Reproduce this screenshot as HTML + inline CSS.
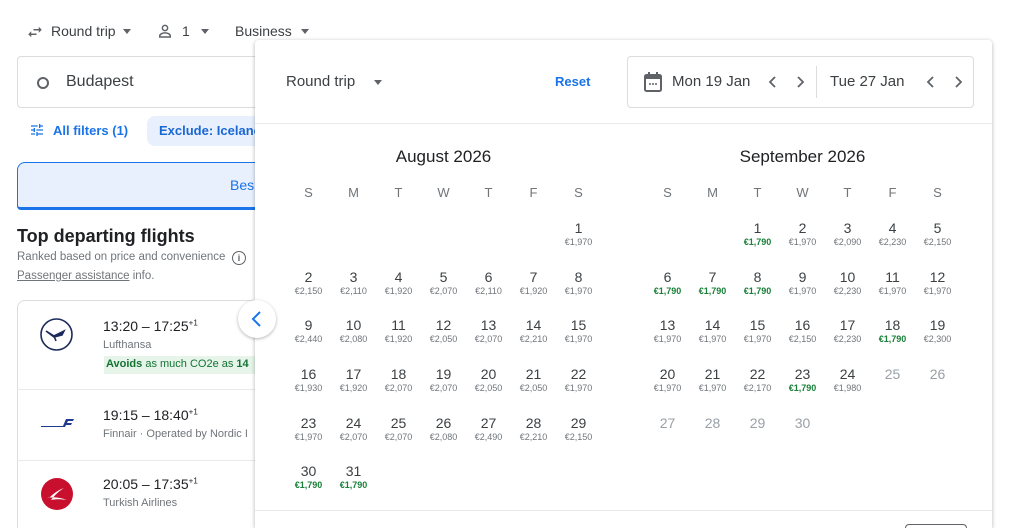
<!DOCTYPE html>
<html><head><meta charset="utf-8"><style>
*{box-sizing:border-box;margin:0;padding:0}
html,body{width:1024px;height:528px;overflow:hidden}
body{background:#fff;font-family:"Liberation Sans",Arial,sans-serif;color:#3c4043;position:relative}
.a{position:absolute;white-space:nowrap}
.grid{position:absolute;display:grid;grid-template-columns:repeat(7,45px);grid-auto-rows:48.7px}
.c{text-align:center;font-size:14px;color:#3c4043;line-height:18px}
.c small{display:block;font-size:9px;color:#70757a;line-height:10px}
.c small.g{color:#188038;font-weight:bold}
.c.x{color:#9aa0a6}
.hd{position:absolute;display:grid;grid-template-columns:repeat(7,45px);font-size:13px;color:#70757a;text-align:center}
</style></head><body>
<svg class="a" style="left:26px;top:23px" width="18" height="18" viewBox="0 0 24 24" fill="#5f6368"><path d="M6.99 11L3 15l3.99 4v-3H14v-2H6.99v-3zM21 9l-3.99-4v3H10v2h7.01v3L21 9z"/></svg>
<div class="a" style="left:51px;top:23px;font-size:14px">Round trip</div>
<div class="a" style="left:123px;top:29px;border:4px solid transparent;border-top:5px solid #5f6368"></div>
<svg class="a" style="left:156px;top:22px" width="18" height="18" viewBox="0 0 24 24" fill="none" stroke="#5f6368" stroke-width="2"><circle cx="12" cy="8" r="3.5"/><path d="M5 20v-1.5c0-2.5 4-4 7-4s7 1.5 7 4V20z"/></svg>
<div class="a" style="left:182px;top:23px;font-size:14px">1</div>
<div class="a" style="left:201px;top:29px;border:4px solid transparent;border-top:5px solid #5f6368"></div>
<div class="a" style="left:235px;top:23px;font-size:14px">Business</div>
<div class="a" style="left:301px;top:29px;border:4px solid transparent;border-top:5px solid #5f6368"></div>
<div class="a" style="left:17px;top:56px;width:260px;height:52px;border:1px solid #dadce0;border-radius:4px"></div>
<div class="a" style="left:37px;top:77px;width:12px;height:12px;border:2.5px solid #5f6368;border-radius:50%"></div>
<div class="a" style="left:66px;top:73px;font-size:16px;color:#3c4043">Budapest</div>
<svg class="a" style="left:29px;top:122px" width="16" height="16" viewBox="0 0 24 24" fill="#1a73e8"><path d="M3 17v2h6v-2H3zM3 5v2h10V5H3zm10 16v-2h8v-2h-8v-2h-2v6h2zM7 9v2H3v2h4v2h2V9H7zm14 4v-2H11v2h10zm-6-4h2V7h4V5h-4V3h-2v6z"/></svg>
<div class="a" style="left:53px;top:123px;font-size:13px;color:#1a73e8;font-weight:bold">All filters (1)</div>
<div class="a" style="left:147px;top:116px;width:130px;height:30px;background:#e8f0fe;border-radius:8px"></div>
<div class="a" style="left:159px;top:123px;font-size:13px;color:#1967d2;font-weight:bold">Exclude: Icelanc</div>
<div class="a" style="left:17px;top:162px;width:260px;height:48px;background:#e8f0fe;border:1px solid #1a73e8;border-bottom:3px solid #1a73e8;border-radius:8px 8px 4px 4px"></div>
<div class="a" style="left:230px;top:177px;font-size:14px;color:#1a73e8">Bes</div>
<div class="a" style="left:17px;top:226px;font-size:18px;color:#202124;font-weight:bold">Top departing flights</div>
<div class="a" style="left:17px;top:251px;font-size:11.5px;color:#70757a">Ranked based on price and convenience</div>
<div class="a" style="left:232px;top:251px;width:14px;height:14px;border:1.3px solid #5f6368;border-radius:50%;font-size:9px;text-align:center;line-height:12px;color:#5f6368;font-weight:bold">i</div>
<div class="a" style="left:17px;top:270px;font-size:11.5px;color:#70757a"><u>Passenger assistance</u> info.</div>
<div class="a" style="left:17px;top:300px;width:270px;height:240px;border:1px solid #dadce0;border-radius:8px"></div>
<div class="a" style="left:17px;top:389px;width:260px;border-top:1px solid #e8eaed"></div>
<div class="a" style="left:17px;top:460px;width:260px;border-top:1px solid #e8eaed"></div>
<svg class="a" style="left:40px;top:318px" width="33" height="33" viewBox="0 0 33 33"><circle cx="16.5" cy="16.5" r="15.5" fill="none" stroke="#1b2a5a" stroke-width="1.6"/><path d="M6 13l8 5 10-5 -2 4 -8 2z M14 18l2 5" stroke="#1b2a5a" stroke-width="1.6" fill="#1b2a5a"/></svg>
<div class="a" style="left:103px;top:318px;font-size:14px;color:#202124">13:20 – 17:25<sup style="font-size:8px">+1</sup></div>
<div class="a" style="left:103px;top:339px;font-size:11px;color:#70757a">Lufthansa</div>
<div class="a" style="left:104px;top:356px;width:152px;height:18px;background:#e6f4ea"></div>
<div class="a" style="left:106px;top:358px;font-size:11px;color:#137333"><b>Avoids</b> as much CO2e as <b>14</b></div>
<svg class="a" style="left:40px;top:416px" width="34" height="12" viewBox="0 0 34 12"><path d="M1 10h22l3-7h8l-1 2h-5l-1 2h5l-1 2h-5l-1 2H1z" fill="#1f3a8f"/></svg>
<div class="a" style="left:103px;top:407px;font-size:14px;color:#202124">19:15 – 18:40<sup style="font-size:8px">+1</sup></div>
<div class="a" style="left:103px;top:428px;font-size:11px;color:#70757a">Finnair · Operated by Nordic I</div>
<div class="a" style="left:41px;top:478px;width:32px;height:32px;border-radius:50%;background:#c8102e"></div>
<svg class="a" style="left:41px;top:478px" width="32" height="32" viewBox="0 0 32 32"><path d="M6 20c6-1 12-1 20 2-6-1-11-1-16 0 4-5 8-9 13-12-6 2-11 6-15 10z" fill="#fff"/></svg>
<div class="a" style="left:103px;top:476px;font-size:14px;color:#202124">20:05 – 17:35<sup style="font-size:8px">+1</sup></div>
<div class="a" style="left:103px;top:497px;font-size:11px;color:#70757a">Turkish Airlines</div>
<div class="a" style="left:255px;top:40px;width:737px;height:488px;background:#fff;box-shadow:0 1px 4px rgba(0,0,0,.3);border-radius:4px 4px 0 0"></div>
<div class="a" style="left:255px;top:123px;width:737px;border-top:1px solid #e8eaed"></div>
<div class="a" style="left:255px;top:510px;width:737px;border-top:1px solid #e8eaed"></div>
<div class="a" style="left:905px;top:524px;width:62px;height:4px;border:1px solid #5f6368;border-radius:4px 4px 0 0;border-bottom:none"></div>
<div class="a" style="left:286px;top:73px;font-size:15px;color:#3c4043">Round trip</div>
<div class="a" style="left:374px;top:80px;border:4px solid transparent;border-top:5px solid #5f6368"></div>
<div class="a" style="left:555px;top:74px;font-size:13px;color:#1a73e8;font-weight:bold">Reset</div>
<div class="a" style="left:627px;top:56px;width:347px;height:52px;border:1px solid #dadce0;border-radius:4px"></div>
<svg class="a" style="left:643px;top:71px" width="20" height="22" viewBox="0 0 20 22"><rect x="2" y="4" width="16" height="16" rx="1.5" fill="none" stroke="#5f6368" stroke-width="2"/><rect x="2" y="4" width="16" height="4" fill="#5f6368"/><rect x="5" y="1" width="2" height="4" fill="#5f6368"/><rect x="13" y="1" width="2" height="4" fill="#5f6368"/><circle cx="7" cy="13" r="1" fill="#5f6368"/><circle cx="10" cy="13" r="1" fill="#5f6368"/><circle cx="13" cy="13" r="1" fill="#5f6368"/></svg>
<div class="a" style="left:672px;top:73px;font-size:15px;color:#3c4043">Mon 19 Jan</div>
<svg class="a" style="left:766px;top:75px" width="14" height="14" viewBox="0 0 14 14" fill="none" stroke="#5f6368" stroke-width="1.8"><path d="M9 2L4 7l5 5"/></svg>
<svg class="a" style="left:793px;top:75px" width="14" height="14" viewBox="0 0 14 14" fill="none" stroke="#5f6368" stroke-width="1.8"><path d="M5 2l5 5-5 5"/></svg>
<div class="a" style="left:816px;top:66px;height:32px;border-left:1px solid #dadce0"></div>
<div class="a" style="left:830px;top:73px;font-size:15px;color:#3c4043">Tue 27 Jan</div>
<svg class="a" style="left:924px;top:75px" width="14" height="14" viewBox="0 0 14 14" fill="none" stroke="#5f6368" stroke-width="1.8"><path d="M9 2L4 7l5 5"/></svg>
<svg class="a" style="left:951px;top:75px" width="14" height="14" viewBox="0 0 14 14" fill="none" stroke="#5f6368" stroke-width="1.8"><path d="M5 2l5 5-5 5"/></svg>
<div class="a" style="left:238px;top:300px;width:38px;height:38px;border-radius:50%;background:#fff;box-shadow:0 1px 3px rgba(0,0,0,.3)"></div>
<svg class="a" style="left:249px;top:310px" width="16" height="18" viewBox="0 0 16 18" fill="none" stroke="#1a73e8" stroke-width="2"><path d="M11 2L4 9l7 7"/></svg>
<div class="a" style="left:286px;top:147px;width:315px;text-align:center;font-size:17px;color:#202124">August 2026</div>
<div class="a" style="left:645px;top:147px;width:315px;text-align:center;font-size:17px;color:#202124">September 2026</div>
<div class="hd" style="left:286px;top:185px"><div>S</div><div>M</div><div>T</div><div>W</div><div>T</div><div>F</div><div>S</div></div>
<div class="hd" style="left:645px;top:185px"><div>S</div><div>M</div><div>T</div><div>W</div><div>T</div><div>F</div><div>S</div></div>
<div class="grid" style="left:286px;top:219px">
<div></div><div></div><div></div><div></div><div></div><div></div><div class="c">1<small>€1,970</small></div>
<div class="c">2<small>€2,150</small></div><div class="c">3<small>€2,110</small></div><div class="c">4<small>€1,920</small></div><div class="c">5<small>€2,070</small></div><div class="c">6<small>€2,110</small></div><div class="c">7<small>€1,920</small></div><div class="c">8<small>€1,970</small></div>
<div class="c">9<small>€2,440</small></div><div class="c">10<small>€2,080</small></div><div class="c">11<small>€1,920</small></div><div class="c">12<small>€2,050</small></div><div class="c">13<small>€2,070</small></div><div class="c">14<small>€2,210</small></div><div class="c">15<small>€1,970</small></div>
<div class="c">16<small>€1,930</small></div><div class="c">17<small>€1,920</small></div><div class="c">18<small>€2,070</small></div><div class="c">19<small>€2,070</small></div><div class="c">20<small>€2,050</small></div><div class="c">21<small>€2,050</small></div><div class="c">22<small>€1,970</small></div>
<div class="c">23<small>€1,970</small></div><div class="c">24<small>€2,070</small></div><div class="c">25<small>€2,070</small></div><div class="c">26<small>€2,080</small></div><div class="c">27<small>€2,490</small></div><div class="c">28<small>€2,210</small></div><div class="c">29<small>€2,150</small></div>
<div class="c">30<small class="g">€1,790</small></div><div class="c">31<small class="g">€1,790</small></div>
</div>
<div class="grid" style="left:645px;top:219px">
<div></div><div></div><div class="c">1<small class="g">€1,790</small></div><div class="c">2<small>€1,970</small></div><div class="c">3<small>€2,090</small></div><div class="c">4<small>€2,230</small></div><div class="c">5<small>€2,150</small></div>
<div class="c">6<small class="g">€1,790</small></div><div class="c">7<small class="g">€1,790</small></div><div class="c">8<small class="g">€1,790</small></div><div class="c">9<small>€1,970</small></div><div class="c">10<small>€2,230</small></div><div class="c">11<small>€1,970</small></div><div class="c">12<small>€1,970</small></div>
<div class="c">13<small>€1,970</small></div><div class="c">14<small>€1,970</small></div><div class="c">15<small>€1,970</small></div><div class="c">16<small>€2,150</small></div><div class="c">17<small>€2,230</small></div><div class="c">18<small class="g">€1,790</small></div><div class="c">19<small>€2,300</small></div>
<div class="c">20<small>€1,970</small></div><div class="c">21<small>€1,970</small></div><div class="c">22<small>€2,170</small></div><div class="c">23<small class="g">€1,790</small></div><div class="c">24<small>€1,980</small></div><div class="c x">25</div><div class="c x">26</div>
<div class="c x">27</div><div class="c x">28</div><div class="c x">29</div><div class="c x">30</div>
</div>
</body></html>
